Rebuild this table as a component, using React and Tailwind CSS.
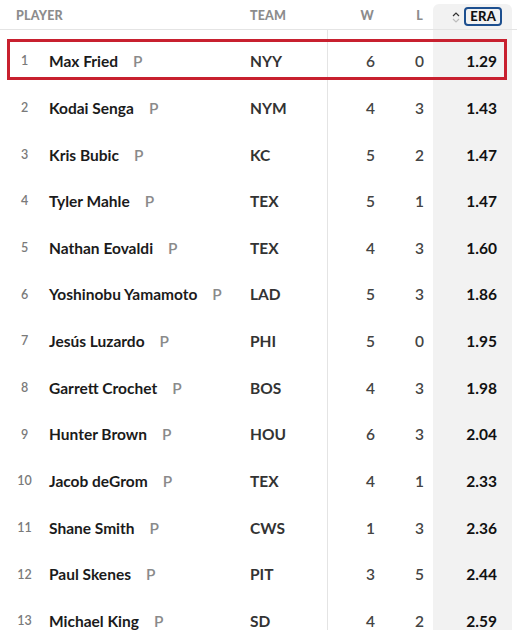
import React from 'react';

const rows = [
  { rank: 1, name: "Max Fried", team: "NYY", w: 6, l: 0, era: "1.29" },
  { rank: 2, name: "Kodai Senga", team: "NYM", w: 4, l: 3, era: "1.43" },
  { rank: 3, name: "Kris Bubic", team: "KC", w: 5, l: 2, era: "1.47" },
  { rank: 4, name: "Tyler Mahle", team: "TEX", w: 5, l: 1, era: "1.47" },
  { rank: 5, name: "Nathan Eovaldi", team: "TEX", w: 4, l: 3, era: "1.60" },
  { rank: 6, name: "Yoshinobu Yamamoto", team: "LAD", w: 5, l: 3, era: "1.86" },
  { rank: 7, name: "Jesús Luzardo", team: "PHI", w: 5, l: 0, era: "1.95" },
  { rank: 8, name: "Garrett Crochet", team: "BOS", w: 4, l: 3, era: "1.98" },
  { rank: 9, name: "Hunter Brown", team: "HOU", w: 6, l: 3, era: "2.04" },
  { rank: 10, name: "Jacob deGrom", team: "TEX", w: 4, l: 1, era: "2.33" },
  { rank: 11, name: "Shane Smith", team: "CWS", w: 1, l: 3, era: "2.36" },
  { rank: 12, name: "Paul Skenes", team: "PIT", w: 3, l: 5, era: "2.44" },
  { rank: 13, name: "Michael King", team: "SD", w: 4, l: 2, era: "2.59" },
];

const SortIcon = () => (
  <svg width="8" height="13" viewBox="0 0 8 13" className="mr-[4px] mt-[1px]">
    <path d="M1 5 L4 2 L7 5" fill="none" stroke="#333" strokeWidth="1.2" />
    <path d="M1 8 L4 11 L7 8" fill="none" stroke="#bdbdbd" strokeWidth="1.2" />
  </svg>
);

const StatsTable = () => {
  return (
    <div className="relative w-[517px] bg-white" style={{ fontFamily: 'Lato, "Noto Sans", sans-serif' }}>
      {/* header */}
      <div className="flex h-[30px] border-b border-[#e4e4e4] text-[12.5px] font-black text-[#8c8c8c] tracking-[0.2px]">
        <div className="w-[249px] pl-[16px] pt-[3px] flex items-center">PLAYER</div>
        <div className="w-[79px] pl-[1px] pt-[3px] flex items-center">TEAM</div>
        <div className="w-[52px] pr-[6px] pt-[3px] flex items-center justify-end">W</div>
        <div className="w-[53px] pr-[10px] pt-[3px] flex items-center justify-end">L</div>
        <div className="w-[79px] mt-[4px] rounded-t-[6px] bg-[#f2f2f2] pr-[10px] flex items-center justify-end">
          <SortIcon />
          <span className="border-2 border-[#1d4f8f] rounded-[4px] px-[4px] h-[19px] flex items-center text-[#111] text-[13px] leading-none">ERA</span>
        </div>
      </div>

      {/* spacer that keeps the column lines going */}
      <div className="flex h-[8.5px]">
        <div className="w-[328px] border-r border-[#e4e4e4]" />
        <div className="w-[105px]" />
        <div className="w-[79px] bg-[#f2f2f2]" />
      </div>

      {rows.map((r) => (
        <div key={r.rank} className="flex h-[46.67px] items-center text-[15.5px]">
          <div className="w-[49px] h-full flex items-center justify-center text-[12.5px] text-[#7a7a7a] font-semibold">{r.rank}</div>
          <div className="w-[200px] h-full flex items-center">
            <span className="font-bold text-[#1b1b1b]">{r.name}</span>
            <span className="ml-[15px] font-semibold text-[#8a8a8a]">P</span>
          </div>
          <div className="w-[79px] h-full flex items-center pl-[1px] border-r border-[#e4e4e4] font-bold text-[#333]">{r.team}</div>
          <div className="w-[52px] h-full flex items-center justify-end pr-[5px] font-semibold text-[#444]">{r.w}</div>
          <div className="w-[53px] h-full flex items-center justify-end pr-[9px] font-semibold text-[#444]">{r.l}</div>
          <div className="w-[79px] h-full flex items-center justify-end pr-[15px] bg-[#f2f2f2] font-bold text-[#111]">{r.era}</div>
        </div>
      ))}

      {/* highlight around the leader */}
      <div className="absolute left-[7px] top-[39px] w-[500px] h-[41px] border-[3px] border-[#c8202f]" />
    </div>
  );
};

export default function App() {
  return <StatsTable />;
}
